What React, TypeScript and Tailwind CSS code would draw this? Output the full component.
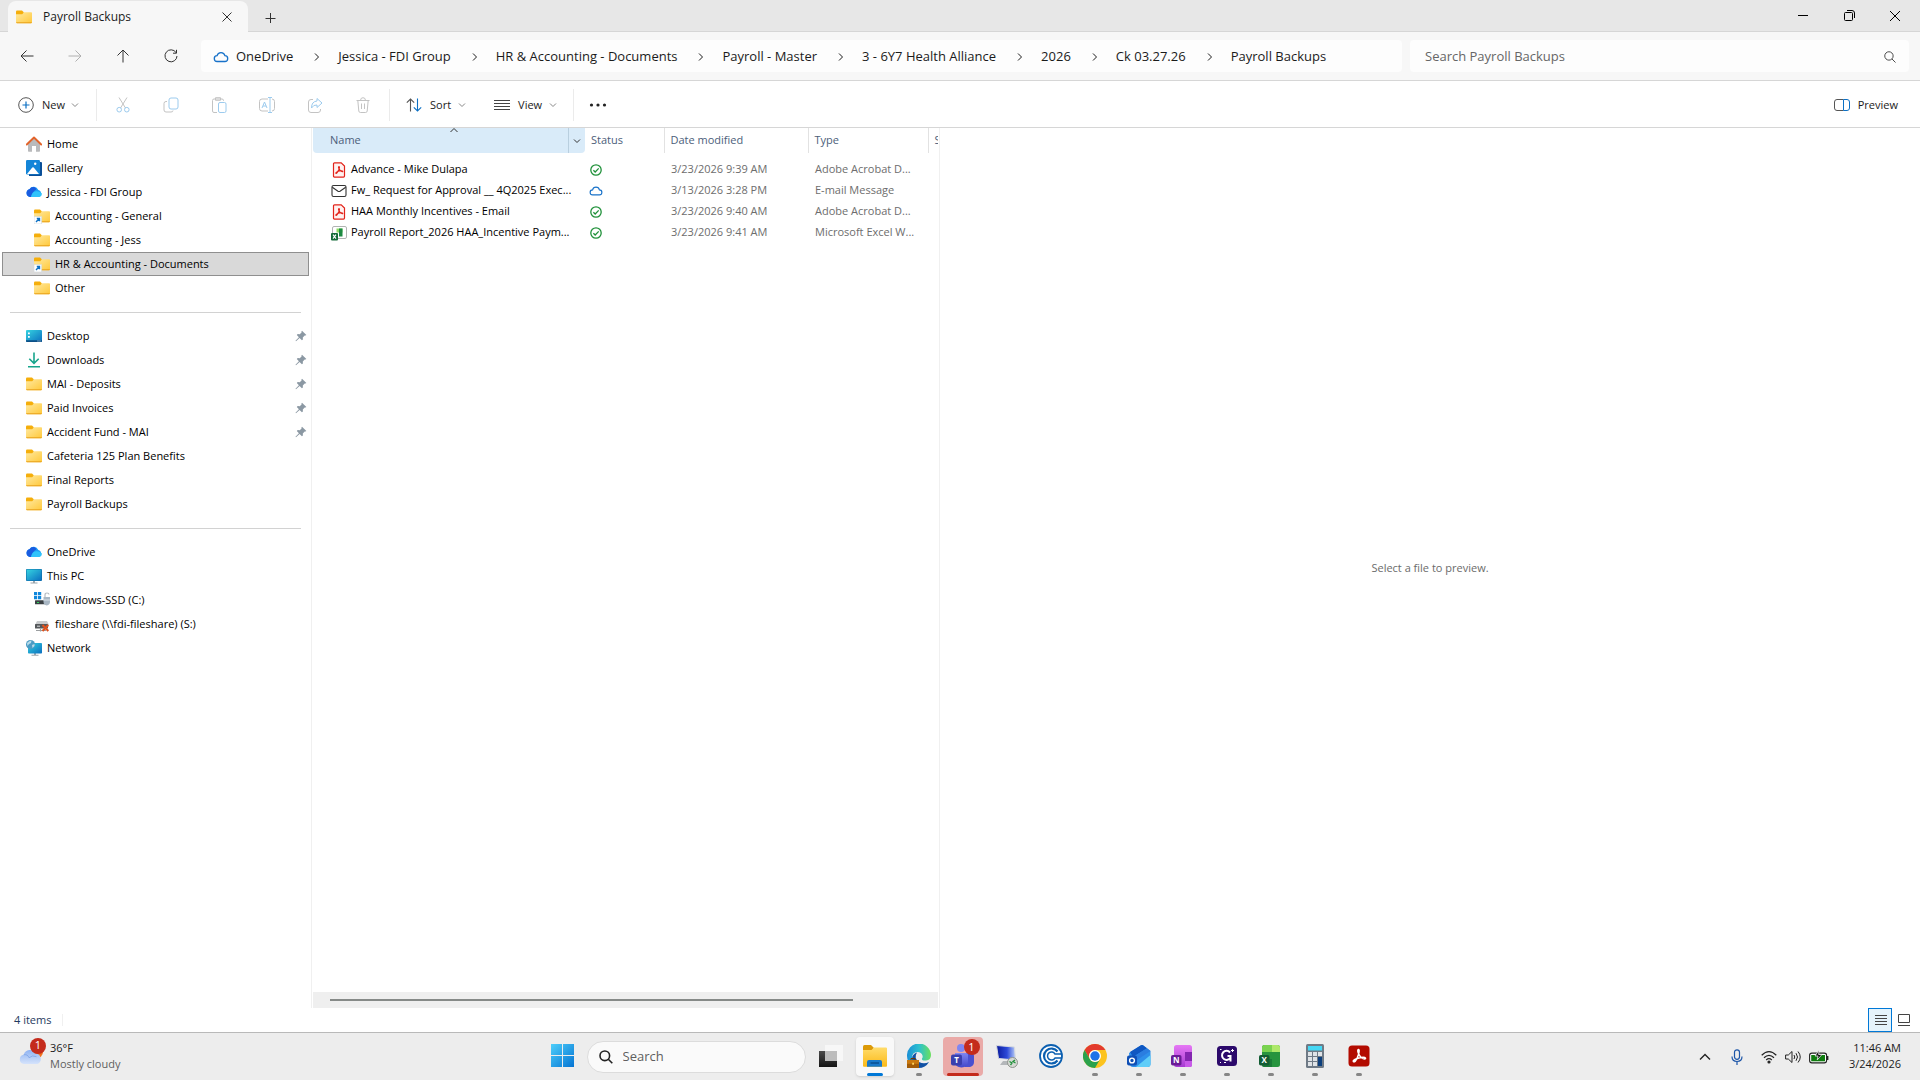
import type { ReactNode } from 'react'

type IconProps = { className?: string }

type TreeItem = {
  label: string
  icon: ReactNode
  nested?: boolean
  pinned?: boolean
  selected?: boolean
}

type FileRow = {
  name: string
  icon: ReactNode
  synced: boolean
  modified: string
  type: string
}

function Chevron({ className = 'w-2 h-2', d = 'M1 2.5 4 5.5 7 2.5' }: { className?: string; d?: string }) {
  return (
    <svg viewBox="0 0 8 8" className={className} fill="none" stroke="currentColor" strokeWidth="1">
      <path d={d} />
    </svg>
  )
}

function FolderIcon({ className = 'w-4 h-4', shortcut = false }: { className?: string; shortcut?: boolean }) {
  return (
    <svg viewBox="0 0 16 16" className={className}>
      <path d="M0 2.5Q0 1.4 1.1 1.4H6l2 2V6H0z" fill="#f5ae0b" />
      <path d="M0 5.2h6.2L8 3.3h7.2q.8 0 .8.8v9.1q0 1-1 1H1q-1 0-1-1z" fill="url(#folder)" />
      <path d="M.1 13.3q.1.9 1 .9H15q.9 0 .9-.9z" fill="#e9a21c" />
      {shortcut && (
        <g>
          <path d="M0 8.6h7.6V16H0z" fill="#fff" stroke="#cdd6de" strokeWidth=".6" />
          <path d="M2 14l3.4-3.4M2.8 10.5h2.7v2.7" fill="none" stroke="#0c70c4" strokeWidth="1.4" />
        </g>
      )}
    </svg>
  )
}

function HomeIcon() {
  return (
    <svg viewBox="0 0 16 16" className="w-4 h-4">
      <path d="M2 7.5 8 2l6 5.5V15q0 .7-.7.7H10V10H6v5.7H2.7q-.7 0-.7-.7z" fill="#b9babc" />
      <path d="M.8 8.5 8 1.5l7.2 7" fill="none" stroke="#e2632a" strokeWidth="1.9" strokeLinecap="round" strokeLinejoin="round" />
    </svg>
  )
}

function GalleryIcon() {
  return (
    <svg viewBox="0 0 16 16" className="w-4 h-4">
      <path d="M3 2h12q1 0 1 1v12q0 1-1 1H3z" fill="#0a4f98" />
      <rect width="14" height="14.5" rx="1.2" fill="#1485d8" />
      <circle cx="9.2" cy="3.8" r="1.2" fill="#fff" />
      <path d="M1 14 6.3 7.6q.7-.8 1.4 0L13 14z" fill="#fff" />
    </svg>
  )
}

function OneDriveIcon() {
  return (
    <svg viewBox="0 0 16 16" className="w-4 h-4">
      <path d="M4 13a4 4 0 0 1-.6-7.8A5 5 0 0 1 12.3 6 3.6 3.6 0 0 1 12.5 13z" fill="#1c9cf5" />
      <path d="M4 13a4 4 0 0 1-.6-7.8 4.7 4.7 0 0 1 4-2.3q3 .5 2.8 2.6Q6.5 7.4 5 13z" fill="#1a5ce0" />
      <path d="M5 13q.8-5 5-5.7 3.5-.4 5.9 2.2A3.5 3.5 0 0 1 12.5 13z" fill="#30c3fb" />
    </svg>
  )
}

function MonitorIcon() {
  return (
    <svg viewBox="0 0 16 16" className="w-4 h-4">
      <path d="M7 12h2v2.5h2.5v1h-7v-1H7z" fill="#9aa5ad" />
      <rect y="1" width="16" height="12" rx="1" fill="#0f6da8" />
      <rect x=".6" y="1.6" width="14.8" height="10.8" rx=".6" fill="url(#screen)" />
    </svg>
  )
}

function DesktopIcon() {
  return (
    <svg viewBox="0 0 16 16" className="w-4 h-4">
      <rect y="2" width="16" height="12" rx="1" fill="url(#screen)" />
      <path d="M2 4.5h1.8v1.8H2zM2 8h1.8v1.8H2z" fill="#fff" />
      <path d="M0 12.2h16V13q0 1-1 1H1q-1 0-1-1z" fill="#0c4f86" />
      <path d="M11.5 13h1M13.5 13h1" stroke="#fff" strokeWidth=".8" />
    </svg>
  )
}

function DownloadIcon() {
  return (
    <svg viewBox="0 0 16 16" className="w-4 h-4" fill="none" stroke="#17a58c" strokeWidth="1.6">
      <path d="M8 .5V11M3.3 6.8 8 11.4l4.7-4.6M2 14.7h12" />
    </svg>
  )
}

function DriveIcon() {
  return (
    <svg viewBox="0 0 16 16" className="w-4 h-4">
      <path d="M0 0h3.2v3.2H0zM4 0h3.2v3.2H4zM0 4h3.2v3.2H0zM4 4h3.2v3.2H4z" fill="#0f86dc" />
      <rect x="1" y="8.3" width="11" height="4" rx=".5" fill="#3b4145" />
      <path d="M3 10.5h2" stroke="#2fd45c" strokeWidth="1" />
      <path d="M11 5V3q0-2 2-2t2 1.6" fill="none" stroke="#b6bcc2" strokeWidth="1.2" />
      <path d="M9.5 5H16v5q0 2.5-3.2 3.5Q9.5 12.5 9.5 10z" fill="#a9b7c4" />
      <path d="M9.5 8H16" stroke="#dce3e9" />
    </svg>
  )
}

function NetworkDriveIcon() {
  return (
    <svg viewBox="0 0 16 16" className="w-4 h-4">
      <path d="M3 5h10l2 4H1z" fill="#c9cbcd" />
      <rect x="1" y="8" width="13" height="4.5" rx=".6" fill="#55585b" />
      <path d="M3 10.2h3" stroke="#d8dadb" />
      <path d="M2 14.5h10M6.5 12.5v3" stroke="#9b9ea0" strokeWidth="1.2" />
      <path d="m8.5 9 5.8 6M14.3 9l-5.8 6" stroke="#e0501b" strokeWidth="2" />
    </svg>
  )
}

function NetworkIcon() {
  return (
    <svg viewBox="0 0 16 16" className="w-4 h-4">
      <path d="M8 13h2v1.8h2.5v1h-7v-1H8z" fill="#9aa5ad" />
      <rect x="2" y="3" width="14" height="10.5" rx=".8" fill="url(#screen)" />
      <circle cx="4.5" cy="4.5" r="4.5" fill="#4b9bc4" />
      <path d="M1 3q3-3 4.5-2.5L5 3 3 4 1.5 6zM6 5l2.5-1v2L6.5 8z" fill="#b9dcea" />
    </svg>
  )
}

function PinIcon() {
  return (
    <svg viewBox="0 0 12 12" className="w-3 h-3" fill="#8b98a3">
      <path d="M7 .8 11.4 5l-1 .5-.7-.1-1.9 2 .1 2-1 .9L4.600 8 1 11.300l-.5-.5L3.900 7.300 1.800 5.100l.9-1 2.100.1 1.900-1.900L6.400 1.500z" />
    </svg>
  )
}

function CloudOutline({ className = 'w-4 h-4' }: IconProps) {
  return (
    <svg viewBox="0 0 16 16" className={className} fill="none" stroke="#1872c9" strokeWidth="1.300">
      <path d="M4.3 12.5a2.9 2.9 0 0 1-.2-5.8 4 4 0 0 1 7.8 0 2.9 2.9 0 0 1-.2 5.8z" />
    </svg>
  )
}

function SyncedIcon() {
  return (
    <svg viewBox="0 0 12 12" className="w-3 h-3" fill="none" stroke="#20913a" strokeWidth="1.3">
      <circle cx="6" cy="6" r="5.2" />
      <path d="m3.4 6.2 1.8 1.8 3.5-3.6" />
    </svg>
  )
}

function PdfIcon() {
  return (
    <svg viewBox="0 0 16 16" className="w-4 h-4">
      <path d="M3.5.8h6.7l3.3 3.3v10q0 1-1 1h-9q-1 0-1-1V1.800q0-1 1-1z" fill="#fff1f0" stroke="#e2231a" strokeWidth="1.2" />
      <path d="M8 4.6c-1.3 0 .4 3.4 2 4.5 1.7 1.1 2.5 0 .7-.3-2.5-.3-6.3 1.4-5.9 2.4.5 1 2.3-2 3-3.5C8.400 6.200 8.700 4.600 8 4.600z" fill="none" stroke="#e2231a" strokeWidth="1.2" />
    </svg>
  )
}

function MailIcon() {
  return (
    <svg viewBox="0 0 16 16" className="w-4 h-4" fill="none" stroke="#333" strokeWidth="1.1">
      <rect x="1" y="2.5" width="14" height="11" rx="1.5" />
      <path d="M1.3 4.3 7 8.2q1 .6 2 0l5.7-3.9" />
    </svg>
  )
}

function ExcelFileIcon() {
  return (
    <svg viewBox="0 0 16 16" className="w-4 h-4">
      <rect x="1.500" y="1.500" width="14" height="12" rx="1.500" fill="#fff" stroke="#b0b4b2" />
      <path d="M5.500 3.500h6v4h-6z" fill="#8ddb66" />
      <path d="M8 3.500h3.500v8H8z" fill="#1d8a42" />
      <rect y="8" width="7" height="7.500" rx="1" fill="#146b38" />
      <path d="m2 9.700 3 4M5 9.700l-3 4" stroke="#fff" strokeWidth="1.100" />
    </svg>
  )
}

function SearchIcon({ className = 'w-4 h-4', width = 1.1 }: { className?: string; width?: number }) {
  return (
    <svg viewBox="0 0 16 16" className={className} fill="none" stroke="currentColor" strokeWidth={width}>
      <circle cx="6.8" cy="6.8" r="4.8" />
      <path d="m10.3 10.3 4 4" />
    </svg>
  )
}

// gradients used by more than one icon
function Gradients() {
  return (
    <svg className="absolute w-0 h-0" aria-hidden="true">
      <defs>
        <linearGradient id="folder" x1="0" y1="0" x2="1" y2="1">
          <stop offset="0" stopColor="#ffe9a0" />
          <stop offset="1" stopColor="#ffc83a" />
        </linearGradient>
        <linearGradient id="screen" x1="0" y1="0" x2="1" y2="1">
          <stop offset="0" stopColor="#35d3e0" />
          <stop offset="1" stopColor="#0b6fc0" />
        </linearGradient>
        <linearGradient id="win" gradientUnits="userSpaceOnUse" x1="0" y1="0" x2="24" y2="24">
          <stop offset="0" stopColor="#4fd0fb" />
          <stop offset="1" stopColor="#0372d2" />
        </linearGradient>
        <linearGradient id="taskview" x1="0" y1="0" x2="0" y2="1">
          <stop offset="0" stopColor="#4a4a4a" />
          <stop offset="1" stopColor="#151515" />
        </linearGradient>
        <linearGradient id="explorer" x1="0" y1="0" x2="0" y2="1">
          <stop offset="0" stopColor="#ffdc6b" />
          <stop offset="1" stopColor="#fbb917" />
        </linearGradient>
        <linearGradient id="edge" x1="0" y1="0" x2="1" y2="0">
          <stop offset="0" stopColor="#1b8fd6" />
          <stop offset=".5" stopColor="#2cc0cf" />
          <stop offset="1" stopColor="#6be05c" />
        </linearGradient>
        <linearGradient id="teams" x1="0" y1="0" x2="0" y2="1">
          <stop offset="0" stopColor="#7f86f2" />
          <stop offset="1" stopColor="#4147c9" />
        </linearGradient>
        <linearGradient id="note" x1="0" y1="0" x2="0" y2="1">
          <stop offset="0" stopColor="#e678f5" />
          <stop offset="1" stopColor="#a63bd2" />
        </linearGradient>
        <linearGradient id="rdp" x1="0" y1="0" x2="1" y2="0">
          <stop offset="0" stopColor="#0a1a9c" />
          <stop offset=".55" stopColor="#2b49d8" />
          <stop offset="1" stopColor="#b9cdf7" />
        </linearGradient>
        <linearGradient id="cloud" x1="0" y1="0" x2="0" y2="1">
          <stop offset="0" stopColor="#8fb3f2" />
          <stop offset="1" stopColor="#d5e3fb" />
        </linearGradient>
      </defs>
    </svg>
  )
}

const TREE: TreeItem[][] = [
  [
    { label: 'Home', icon: <HomeIcon /> },
    { label: 'Gallery', icon: <GalleryIcon /> },
    { label: 'Jessica - FDI Group', icon: <OneDriveIcon /> },
    { label: 'Accounting - General', icon: <FolderIcon shortcut />, nested: true },
    { label: 'Accounting - Jess', icon: <FolderIcon />, nested: true },
    { label: 'HR & Accounting - Documents', icon: <FolderIcon shortcut />, nested: true, selected: true },
    { label: 'Other', icon: <FolderIcon />, nested: true },
  ],
  [
    { label: 'Desktop', icon: <DesktopIcon />, pinned: true },
    { label: 'Downloads', icon: <DownloadIcon />, pinned: true },
    { label: 'MAI - Deposits', icon: <FolderIcon />, pinned: true },
    { label: 'Paid Invoices', icon: <FolderIcon />, pinned: true },
    { label: 'Accident Fund - MAI', icon: <FolderIcon />, pinned: true },
    { label: 'Cafeteria 125 Plan Benefits', icon: <FolderIcon /> },
    { label: 'Final Reports', icon: <FolderIcon /> },
    { label: 'Payroll Backups', icon: <FolderIcon /> },
  ],
  [
    { label: 'OneDrive', icon: <OneDriveIcon /> },
    { label: 'This PC', icon: <MonitorIcon /> },
    { label: 'Windows-SSD (C:)', icon: <DriveIcon />, nested: true },
    { label: 'fileshare (\\\\fdi-fileshare) (S:)', icon: <NetworkDriveIcon />, nested: true },
    { label: 'Network', icon: <NetworkIcon /> },
  ],
]

const FILES: FileRow[] = [
  { name: 'Advance - Mike Dulapa', icon: <PdfIcon />, synced: true, modified: '3/23/2026 9:39 AM', type: 'Adobe Acrobat D...' },
  { name: 'Fw_ Request for Approval __ 4Q2025 Exec...', icon: <MailIcon />, synced: false, modified: '3/13/2026 3:28 PM', type: 'E-mail Message' },
  { name: 'HAA Monthly Incentives - Email', icon: <PdfIcon />, synced: true, modified: '3/23/2026 9:40 AM', type: 'Adobe Acrobat D...' },
  { name: 'Payroll Report_2026 HAA_Incentive Paym...', icon: <ExcelFileIcon />, synced: true, modified: '3/23/2026 9:41 AM', type: 'Microsoft Excel W...' },
]

const CRUMBS = [
  'OneDrive',
  'Jessica - FDI Group',
  'HR & Accounting - Documents',
  'Payroll - Master',
  '3 - 6Y7 Health Alliance',
  '2026',
  'Ck 03.27.26',
  'Payroll Backups',
]

function TitleBar() {
  return (
    <header className="flex h-8 bg-[#e7e7e7] pl-2 pr-px border-b border-[#d6d6d6]">
      <div className="flex items-center w-60 h-8 mt-px -mb-px rounded-t-lg bg-[#f7f7f7] pl-2 pr-4">
        <FolderIcon />
        <span className="ml-[11px] text-xs text-[#1b1b1b]">Payroll Backups</span>
        <button aria-label="Close tab" className="ml-auto text-[#333]">
          <svg viewBox="0 0 10 10" className="w-2.5 h-2.5" fill="none" stroke="currentColor">
            <path d="m.5.5 9 9M9.5.5l-9 9" />
          </svg>
        </button>
      </div>
      <button aria-label="New tab" className="ml-4 mt-1 text-[#333]">
        <svg viewBox="0 0 12 12" className="w-3 h-3" fill="none" stroke="currentColor">
          <path d="M6.5 1v10M1.500 6.500h10" />
        </svg>
      </button>
      <div className="ml-auto flex items-center text-black">
        <button aria-label="Minimize" className="flex justify-center w-12">
          <svg viewBox="0 0 10 10" className="w-2.5 h-2.5" stroke="currentColor">
            <path d="M0 4.500h10" />
          </svg>
        </button>
        <button aria-label="Restore" className="flex justify-center w-11">
          <svg viewBox="0 0 11 11" className="w-[11px] h-[11px]" fill="none" stroke="currentColor">
            <rect x=".5" y="2.5" width="8" height="8" rx="1" />
            <path d="M3 .5h5q2.5 0 2.5 2.5v5" />
          </svg>
        </button>
        <button aria-label="Close" className="flex justify-center w-12">
          <svg viewBox="0 0 10 10" className="w-2.5 h-2.5" fill="none" stroke="currentColor">
            <path d="m0 0 10 10M10 0 0 10" />
          </svg>
        </button>
      </div>
    </header>
  )
}

function NavButton({ label, d, muted }: { label: string; d: string; muted?: boolean }) {
  return (
    <button aria-label={label} className={muted ? 'flex justify-center w-12 text-[#b0b0b0]' : 'flex justify-center w-12 text-[#333]'}>
      <svg viewBox="0 0 14 14" className="w-3.5 h-3.5" fill="none" stroke="currentColor" strokeWidth="1">
        <path d={d} />
      </svg>
    </button>
  )
}

function AddressBar() {
  return (
    <div className="flex items-center h-[49px] bg-[#f7f7f7] border-b border-[#d6d6d6] pl-[3px] pr-[11px] text-[13px]">
      <NavButton label="Back" d="M13.5 7H1M6.500 1.500 1 7l5.500 5.500" />
      <NavButton label="Forward" d="M.5 7H13M7.500 1.500 13 7l-5.500 5.500" muted />
      <NavButton label="Up" d="M7 13.500V1M1.500 6.500 7 1l5.500 5.500" />
      <NavButton label="Refresh" d="M12 3.500A6 6 0 1 0 13 7M12.500.8v3.400H9" />
      <nav aria-label="Address" className="flex items-center flex-1 h-8 ml-[6px] pl-3 pt-[2px] rounded bg-[#fdfdfd] text-[#1b1b1b]">
        <CloudOutline />
        {CRUMBS.map((crumb, i) => (
          <span key={crumb} className="flex items-center">
            {i > 0 && <Chevron className="w-2 h-2 ml-1" d="M2 .5 5.5 4 2 7.5" />}
            <button className={i > 0 ? 'ml-[17px] mr-4' : 'ml-[7px] mr-4'}>{crumb}</button>
          </span>
        ))}
      </nav>
      <div className="flex items-center w-[499px] h-8 ml-2 pl-[15px] pr-3 pt-[2px] rounded bg-[#fdfdfd] text-[#444]">
        <input
          type="search"
          aria-label="Search Payroll Backups"
          placeholder="Search Payroll Backups"
          className="flex-1 bg-transparent outline-none placeholder:text-[#666]"
        />
        <SearchIcon className="w-3.5 h-3.5" />
      </div>
    </div>
  )
}

function ToolButton({ label, children }: { label: string; children: ReactNode }) {
  return (
    <button aria-label={label} className="flex justify-center w-12" disabled>
      <svg viewBox="0 0 16 16" className="w-4 h-4" fill="none" stroke="#c3c3c3">
        {children}
      </svg>
    </button>
  )
}

function Toolbar() {
  return (
    <div className="flex items-center h-[47px] pt-[2px] bg-white border-b border-[#d6d6d6] text-[11px] text-[#1b1b1b]">
      <button className="flex items-center w-[97px] h-8 pl-[18px] border-r border-[#ebebeb]">
        <svg viewBox="0 0 16 16" className="w-4 h-4" fill="none">
          <circle cx="8" cy="8" r="7.3" stroke="#555" />
          <path d="M8 4.500v7M4.500 8h7" stroke="#0c70c4" strokeWidth="1.200" />
        </svg>
        <span className="ml-2">New</span>
        <Chevron className="w-2 h-2 ml-1.5 text-[#888]" />
      </button>
      <div className="flex items-center h-8 w-[293px] pl-[2px] border-r border-[#ebebeb]">
        <ToolButton label="Cut">
          <path d="M4 .5 10.5 11M12 .5 5.500 11" />
          <g stroke="#9ccbee">
            <circle cx="4.200" cy="12.700" r="2.300" />
            <circle cx="11.800" cy="12.700" r="2.300" />
          </g>
        </ToolButton>
        <ToolButton label="Copy">
          <path d="M4 4.500H3q-2 0-2 2V13q0 2 2 2h5q2 0 2-1.500" />
          <rect x="6" y="1" width="9" height="11" rx="2" stroke="#9ccbee" />
        </ToolButton>
        <ToolButton label="Paste">
          <path d="M6 15.500H3q-1.500 0-1.500-1.500V3.500Q1.500 2 3 2h8q1.500 0 1.500 1.500V4M4.500.7h5v2.600h-5z" />
          <rect x="7.500" y="5.500" width="7.500" height="10" rx="1.500" stroke="#9ccbee" />
        </ToolButton>
        <ToolButton label="Rename">
          <path d="M9 2H3Q.5 2 .5 4.500v7Q.5 14 3 14h6M13 2q2.500 0 2.500 2.500v7Q15.500 14 13 14" />
          <path d="M9 .5h4M11 .5v15M9 15.500h4M3 11l2.500-6L8 11M4 9h3" stroke="#9ccbee" />
        </ToolButton>
        <ToolButton label="Share">
          <path d="M6 2.500H4Q1.500 2.500 1.500 5v8q0 2.500 2.500 2.500h7q2.500 0 2.500-2.500v-1" />
          <path d="M10 1.500 15 6l-5 4.500V8Q6.500 7.500 4.500 11 4.500 4.500 10 4z" stroke="#9ccbee" strokeLinejoin="round" />
        </ToolButton>
        <ToolButton label="Delete">
          <path d="M1.500 3.500h13M5.500 3.500q0-2.800 2.500-2.800t2.500 2.800M2.800 3.500l1 10.500q.2 1.500 1.500 1.500h5.400q1.300 0 1.500-1.500l1-10.500M6.500 6.500v5.500M9.500 6.500v5.500" />
        </ToolButton>
      </div>
      <div className="flex items-center h-8 w-[184px] pl-4 border-r border-[#ebebeb]">
        <button className="flex items-center">
          <svg viewBox="0 0 16 14" className="w-4 h-3.5" fill="none" strokeWidth="1.1">
            <path d="M4.500 13.500V1M.8 4.700 4.500 1l3.700 3.700" stroke="#555" />
            <path d="M11.500.5V13M7.800 9.300 11.500 13l3.700-3.700" stroke="#0c70c4" />
          </svg>
          <span className="ml-2">Sort</span>
          <Chevron className="w-2 h-2 ml-[7px] text-[#888]" />
        </button>
        <button className="flex items-center ml-7">
          <svg viewBox="0 0 16 12" className="w-4 h-3" stroke="#444">
            <path d="M0 1.500h16M0 4.500h16M0 7.500h16M0 10.500h16" />
          </svg>
          <span className="ml-2">View</span>
          <Chevron className="w-2 h-2 ml-[7px] text-[#888]" />
        </button>
      </div>
      <button aria-label="See more" className="ml-[15px]">
        <svg viewBox="0 0 18 4" className="w-[18px] h-1" fill="#222">
          <circle cx="2.500" cy="2" r="1.600" />
          <circle cx="9" cy="2" r="1.600" />
          <circle cx="15.500" cy="2" r="1.600" />
        </svg>
      </button>
      <button className="flex items-center ml-auto mr-[22px]">
        <svg viewBox="0 0 16 12" className="w-4 h-3" fill="none">
          <path d="M9.500.5H3Q.5.5.5 3v6q0 2.500 2.500 2.500h6.500" stroke="#555" />
          <path d="M9.500.5H13q2.500 0 2.500 2.500v6q0 2.500-2.500 2.500H9.500z" stroke="#0c70c4" />
        </svg>
        <span className="ml-2">Preview</span>
      </button>
    </div>
  )
}

function TreeLink({ item }: { item: TreeItem }) {
  const indent = item.nested ? 'pl-8' : 'pl-6'
  const state = item.selected ? 'border-[#8f8f8f] bg-[#d9d9d9]' : 'border-transparent'
  return (
    <li>
      <a href="#" className={`flex items-center h-6 mx-[2px] pr-px border ${state}`}>
        <span className={`flex items-center flex-1 ${indent}`}>
          <span className="-ml-px">{item.icon}</span>
          <span className="ml-[5px]">{item.label}</span>
        </span>
        {item.pinned && <PinIcon />}
      </a>
    </li>
  )
}

function Sidebar() {
  return (
    <nav aria-label="Folders" className="w-[312px] shrink-0 border-r border-[#f0f0f0] pt-1 text-[11px] text-black">
      {TREE.map((group, i) => (
        <div key={i}>
          {i > 0 && <hr className="mt-3 mb-[11px] mx-[10px] border-t border-[#d2d2d2]" />}
          <ul>
            {group.map((item) => (
              <TreeLink key={item.label} item={item} />
            ))}
          </ul>
        </div>
      ))}
    </nav>
  )
}

function FileList() {
  return (
    <section className="flex flex-col w-[628px] shrink-0 border-r border-[#f0f0f0] pl-px pr-px text-[11px]">
      <div className="flex-1 overflow-hidden">
        <table className="w-[700px] table-fixed text-left">
          <colgroup>
            <col className="w-[272px]" />
            <col className="w-[79px]" />
            <col className="w-[144px]" />
            <col className="w-[120px]" />
            <col />
          </colgroup>
          <thead className="text-[#4c607a]">
            <tr className="h-[25px]">
              <th className="relative p-0 font-normal bg-[#d9ebf9] rounded-b-sm">
                <div className="flex items-center h-[25px] pl-[17px]">
                  Name
                  <span className="flex items-center justify-center ml-auto w-[17px] h-full pr-px border-l border-[#b9cfdf]">
                    <Chevron className="w-2 h-2 text-[#333]" />
                  </span>
                </div>
                <Chevron className="absolute left-[137px] -top-px w-2 h-2 text-[#333]" d="M.5 5 4 1.5 7.5 5" />
              </th>
              <th className="p-0 pl-[6px] font-normal border-r border-[#e2e2e2]">Status</th>
              <th className="p-0 pl-[6px] font-normal border-r border-[#e2e2e2]">Date modified</th>
              <th className="p-0 pl-[6px] font-normal border-r border-[#e2e2e2]">Type</th>
              <th className="p-0 pl-[6px] font-normal">Size</th>
            </tr>
          </thead>
          <tbody className="text-[#6d6d6d] before:block before:h-[6px]">
            {FILES.map((file) => (
              <tr key={file.name} className="h-[21px]">
                <td className="p-0 pl-[18px] text-black">
                  <span className="flex items-center whitespace-nowrap">
                    {file.icon}
                    <span className="ml-1">{file.name}</span>
                  </span>
                </td>
                <td className="p-0 pl-[5px]">{file.synced ? <SyncedIcon /> : <CloudOutline className="w-3.5 h-3.5 -ml-px" />}</td>
                <td className="p-0 pl-[7px]">{file.modified}</td>
                <td className="p-0 pl-[7px]">{file.type}</td>
                <td />
              </tr>
            ))}
          </tbody>
        </table>
      </div>
      <div className="flex items-center h-4 bg-[#efefef] pl-[17px]">
        <div className="w-[523px] h-[2px] bg-[#868a88]" />
      </div>
    </section>
  )
}

function StatusBar() {
  return (
    <footer className="flex items-center h-6 pl-[14px] pr-[9px] bg-white text-[11px] text-[#1f3a60]">
      <span className="flex items-center w-[49px] h-3 border-r border-[#f0f0f0]">4 items</span>
      <button aria-label="Details view" className="flex items-center justify-center w-6 h-6 ml-auto pl-[2px] border border-[#0078d7] bg-[#e5f3fb]">
        <svg viewBox="0 0 12 11" className="w-3 h-[11px]" stroke="#444">
          <path d="M0 .5h12M0 3.500h12M0 6.500h12M0 9.500h12" />
        </svg>
      </button>
      <button aria-label="Large icons" className="ml-[6px] mr-px">
        <svg viewBox="0 0 12 12" className="w-3 h-3" fill="none" stroke="#444">
          <path d="M.5.5h11v8H.5zM0 11.500h12" />
        </svg>
      </button>
    </footer>
  )
}

function AppSlot({ label, state = 'running', children }: { label: string; state?: 'idle' | 'running' | 'active' | 'alert'; children: ReactNode }) {
  const box = {
    idle: 'w-10',
    running: 'w-10',
    active: 'w-[38px] bg-[#f9f9f9] shadow-sm',
    alert: 'w-10 bg-[#eaaaa8]',
  }[state]
  const line = {
    idle: 'w-0',
    running: 'w-[6px] bg-[#868686]',
    active: 'w-4 bg-[#0078d7]',
    alert: 'w-8 bg-[#c42b1c]',
  }[state]
  return (
    <div className="flex justify-center w-11">
      <button aria-label={label} className={`relative flex flex-col items-center justify-between h-[39px] pt-[7px] rounded ${box}`}>
        <svg viewBox="0 0 24 24" className="w-6 h-6">
          {children}
        </svg>
        <span className={`h-[3px] rounded-full ${line}`} />
        {state === 'alert' && (
          <span className="absolute top-[2px] right-[3px] flex items-center justify-center w-4 h-4 rounded-full bg-[#c42b1c] text-white text-[11px]">1</span>
        )}
      </button>
    </div>
  )
}

function TaskbarApps() {
  return (
    <div className="flex items-center">
      <AppSlot label="Start" state="idle">
        <path d="M1 0h11v11H1zM13 0h11v11H13zM1 12h11v11H1zM13 12h11v11H13z" fill="url(#win)" />
      </AppSlot>
      <label className="flex items-center w-[219px] h-8 ml-[3px] mr-[3px] pl-[10px] rounded-full border border-[#dcdcdc] bg-[#fafafa] text-[#222]">
        <SearchIcon className="w-4 h-4" width={1.6} />
        <input type="text" placeholder="Search" aria-label="Search" className="w-32 ml-[9px] bg-transparent text-[13px] outline-none placeholder:text-[#5f5f5f]" />
      </label>
      <AppSlot label="Task view" state="idle">
        <path d="M0 7h18v16H0z" fill="url(#taskview)" />
        <path d="M6 1h18v16H6z" fill="#f7f7f7" />
        <path d="M6 7h12v10H6z" fill="#bcbcbc" />
      </AppSlot>
      <AppSlot label="File Explorer" state="active">
        <path d="M0 2.500Q0 1 1.500 1H8l2.500 2.500V8H0z" fill="#dc9a08" />
        <path d="M0 6h8.500l2.500-2.500h12q1 0 1 1V22q0 .8-1 .8H1q-1 0-1-.8z" fill="url(#explorer)" />
        <path d="M4 22.800V18q0-2 2-2h11q2 0 2 2v4.800z" fill="#1979ca" />
        <path d="M7.500 19h8.500" stroke="#0a4f91" strokeWidth="1.500" />
      </AppSlot>
      <AppSlot label="Edge">
        <path d="M0 12A12 12 0 0 1 24 11q0 5-5 5.500-4.500.3-4-2 1-1 .5-3Q14.500 8 10.500 8 5 8 5 14v4H1.500Q0 15 0 12z" fill="url(#edge)" />
        <path d="M5 15q0-5 5-6.500Q6.500 14 12 18q5 2.500 10 0-3.500 6-10.500 6Q5 22 5 15z" fill="#1151a4" />
        <path d="M0 16h12v8H0z" fill="#c9780f" />
        <path d="M0 19.800h12V24H0z" fill="#a35c08" />
        <path d="M4 16v-1.500h4V16" fill="none" stroke="#6b3700" />
        <path d="M5.200 18.800H7v2H5.200z" fill="#ffd35c" />
      </AppSlot>
      <AppSlot label="Teams" state="alert">
        <circle cx="10" cy="4" r="4" fill="#7f86f2" />
        <path d="M13 9h7q3 0 3 3v6q0 4-4 5h-5z" fill="#4a50d0" />
        <path d="M4 9h11q2 0 2 2v6q0 6.500-6.500 6.500T4 17z" fill="url(#teams)" />
        <rect y="10.500" width="11" height="11" rx="2" fill="#3a3fae" />
        <text x="5.500" y="19" textAnchor="middle" fontSize="8" fontWeight="700" fill="#fff">T</text>
      </AppSlot>
      <AppSlot label="Remote Desktop" state="idle">
        <path d="M8 17h6l3 4H5z" fill="#b4b7ba" />
        <path d="M1.500 1.500 19.500 3l1 13-17-1.500z" fill="url(#rdp)" stroke="#d8dbdf" />
        <circle cx="17.500" cy="18.500" r="5" fill="#d6d9d4" stroke="#8f948d" />
        <path d="m14.500 17.500 2.500 1.500-1.500 2M20 16l-2 1.500 2.500 1.500" fill="none" stroke="#20913a" strokeWidth="1.300" />
      </AppSlot>
      <AppSlot label="C app" state="idle">
        <circle cx="12" cy="12" r="11" fill="#fff" stroke="#0b5fb0" strokeWidth="1.800" />
        <path d="M18.500 7.500A7.500 7.500 0 1 0 18.500 16.500" fill="none" stroke="#0b5fb0" strokeWidth="2.200" />
        <path d="M16 10a4 4 0 1 0 0 4M15.500 10H23M15.500 14H23" fill="none" stroke="#0b5fb0" strokeWidth="1.500" />
      </AppSlot>
      <AppSlot label="Chrome">
        <circle cx="12" cy="12" r="12" fill="#fcc31e" />
        <path d="M1.600 6A12 12 0 0 1 22.400 6H12a6 6 0 0 0-5.200 9z" fill="#e33b2e" />
        <path d="M1.600 6A12 12 0 0 0 12 24l5.200-9A6 6 0 0 1 6.800 15z" fill="#2ba24c" />
        <circle cx="12" cy="12" r="6" fill="#fff" />
        <circle cx="12" cy="12" r="4.700" fill="#1c73e8" />
      </AppSlot>
      <AppSlot label="Outlook">
        <path d="M2 9 14 1.200q1-.5 2 0L23.500 7v13q0 3-3 3H6q-3 0-3-3z" fill="#2d8fea" />
        <path d="M3 8 14 1.200q1-.5 2 0l4 3L6 13z" fill="#0f57c2" />
        <path d="m6 13 14-8.800L23.500 7 10 16z" fill="#2b7de0" />
        <path d="M9 23 23.500 11v9q0 3-3 3z" fill="#5fcdf8" />
        <rect y="11.500" width="10" height="10" rx="2" fill="#0f4fb5" />
        <circle cx="5" cy="16.500" r="2.400" fill="none" stroke="#fff" strokeWidth="1.400" />
      </AppSlot>
      <AppSlot label="OneNote">
        <rect x="3" y="1" width="18" height="22" rx="2.500" fill="url(#note)" />
        <path d="M14 8h7v9h-7z" fill="#8426b0" />
        <path d="M14 17h7v4q0 2-2 2h-5z" fill="#c85ae8" />
        <rect y="11" width="10.500" height="10.500" rx="1.800" fill="#6a1c96" />
        <text x="5.200" y="19.200" textAnchor="middle" fontSize="8" fontWeight="700" fill="#fff">N</text>
      </AppSlot>
      <AppSlot label="G app">
        <rect x="2" y="2" width="20" height="20" rx="3.500" fill="#2c0a6b" />
        <path d="M15 8.500A4.500 4.500 0 1 0 15.500 13.500V12H12.500M15.500 13v4.500" fill="none" stroke="#fff" strokeWidth="2" />
        <path d="M17.500 5v3M16 6.500h3M5 5.500h1.500M5 18.500h1M9 18.500h2" stroke="#fff" />
      </AppSlot>
      <AppSlot label="Excel">
        <rect x="3" y="1" width="18" height="22" rx="2.500" fill="#27943e" />
        <path d="M5.500 1H13v7H3V3.500Q3 1 5.500 1z" fill="#7ad350" />
        <path d="M13 1h5.500Q21 1 21 3.500V8h-8z" fill="#aee86a" />
        <path d="M3 15h10v8H5.500Q3 23 3 20.500z" fill="#1a7a37" />
        <rect y="11" width="10.500" height="10.500" rx="1.800" fill="#125c33" />
        <text x="5.200" y="19.200" textAnchor="middle" fontSize="8" fontWeight="700" fill="#fff">X</text>
      </AppSlot>
      <AppSlot label="Calculator">
        <rect x="3" width="18" height="24" rx="1.500" fill="#6f7a86" />
        <path d="M5 2h14v4.500H5z" fill="#45d8f5" />
        <path d="M5 8h4v4H5zM10 8h4v4h-4zM15 8h4v4h-4zM5 13h4v4H5zM10 13h4v4h-4zM5 18h4v4H5zM10 18h4v4h-4z" fill="#dfe3e7" />
        <path d="M15 13h4v9h-4z" fill="#0c3f7d" />
      </AppSlot>
      <AppSlot label="Acrobat">
        <rect x="1.500" y="1.500" width="21" height="21" rx="3.500" fill="#b30b00" />
        <path d="M11.500 5.500c-1.800.4 0 5.500 2.800 8 2.500 2 4.700 1.700 4.200.6-.8-1.500-9.500-.5-12 2.300-.8 1.300.5 2 1.800.7C10.500 15 13.500 5.500 11.500 5.500z" fill="none" stroke="#fff" strokeWidth="1.500" />
      </AppSlot>
    </div>
  )
}

function Taskbar() {
  return (
    <footer className="grid grid-cols-[1fr_auto_1fr] items-center h-12 border-t border-[#b9b9b9] bg-[#ededed] text-[#1b1b1b]">
      <button className="relative flex items-center pl-[19px] pb-[2px] text-left">
        <svg viewBox="0 0 24 24" className="w-6 h-6">
          <circle cx="18" cy="8" r="6" fill="#f2711c" />
          <path d="M5 20a4.700 4.700 0 0 1-.3-9.300 6.500 6.500 0 0 1 12-1.200A5.500 5.500 0 0 1 18.500 20z" fill="url(#cloud)" />
          <path d="M4.700 10.700q4-.7 5.300 3 3.500-3 7.500-1" fill="none" stroke="#7ea3e6" strokeWidth=".8" />
        </svg>
        <span className="absolute left-[30px] -top-[2px] flex items-center justify-center w-4 h-4 rounded-full bg-[#c42b1c] text-white text-[11px]">1</span>
        <span className="ml-[7px] text-[11px] leading-4">
          <span className="block">36°F</span>
          <span className="block text-[#5f5f5f]">Mostly cloudy</span>
        </span>
      </button>
      <TaskbarApps />
      <div className="flex items-center justify-end pr-[19px]">
        <button aria-label="Hidden icons">
          <svg viewBox="0 0 12 12" className="w-3 h-3" fill="none" stroke="#222" strokeWidth="1.400">
            <path d="m1 8.500 5-5 5 5" />
          </svg>
        </button>
        <svg viewBox="0 0 12 16" className="w-3 h-4 ml-5" fill="none" stroke="#1c55a8" strokeWidth="1.200">
          <rect x="3.500" y=".8" width="5" height="9.500" rx="2.500" />
          <path d="M1 7.500q0 5 5 5t5-5M6 12.500V16" />
        </svg>
        <button aria-label="Network, volume and battery" className="flex items-center ml-[18px]">
          <svg viewBox="0 0 16 14" className="w-4 h-3.5" fill="none" stroke="#222" strokeWidth="1.200">
            <path d="M.7 5.200q7.300-7.200 14.600 0M3 7.700q5-4.800 10 0M5.200 10q2.800-2.600 5.600 0" />
            <circle cx="8" cy="12" r="1" fill="#222" />
          </svg>
          <svg viewBox="0 0 16 14" className="w-4 h-3.5 ml-2" fill="none" stroke="#222">
            <path d="M.6 5h2.700L7 1.500v11L3.300 9H.6z" strokeLinejoin="round" />
            <path d="M9 5q1.500 2 0 4M11 3.200q3 3.800 0 7.600M13 1.500q4.500 5.500 0 11" />
          </svg>
          <svg viewBox="0 0 20 14" className="w-5 h-3.5 ml-2">
            <rect x=".6" y="3.100" width="17" height="9.800" rx="2.300" fill="#fff" stroke="#222" strokeWidth="1.100" />
            <path d="M2.200 5h13.800v6.300H2.200z" fill="#107c10" />
            <path d="M18.700 6v4" stroke="#222" strokeWidth="1.400" />
            <path d="M10 0 6 6h3l-.8 4L13 4.500H9.700z" fill="#111" stroke="#ededed" strokeWidth=".8" />
          </svg>
        </button>
        <button className="w-[72px] pb-[2px] text-right text-[11px] leading-4">
          <span className="block">11:46 AM</span>
          <span className="block">3/24/2026</span>
        </button>
      </div>
    </footer>
  )
}

export default function App() {
  return (
    <div className="flex flex-col min-h-screen bg-white font-['Open_Sans',sans-serif]">
      <Gradients />
      <TitleBar />
      <AddressBar />
      <Toolbar />
      <main className="flex flex-1">
        <Sidebar />
        <FileList />
        <section className="flex items-center justify-center flex-1 text-[11px] text-[#6b6b6b]">Select a file to preview.</section>
      </main>
      <StatusBar />
      <Taskbar />
    </div>
  )
}
